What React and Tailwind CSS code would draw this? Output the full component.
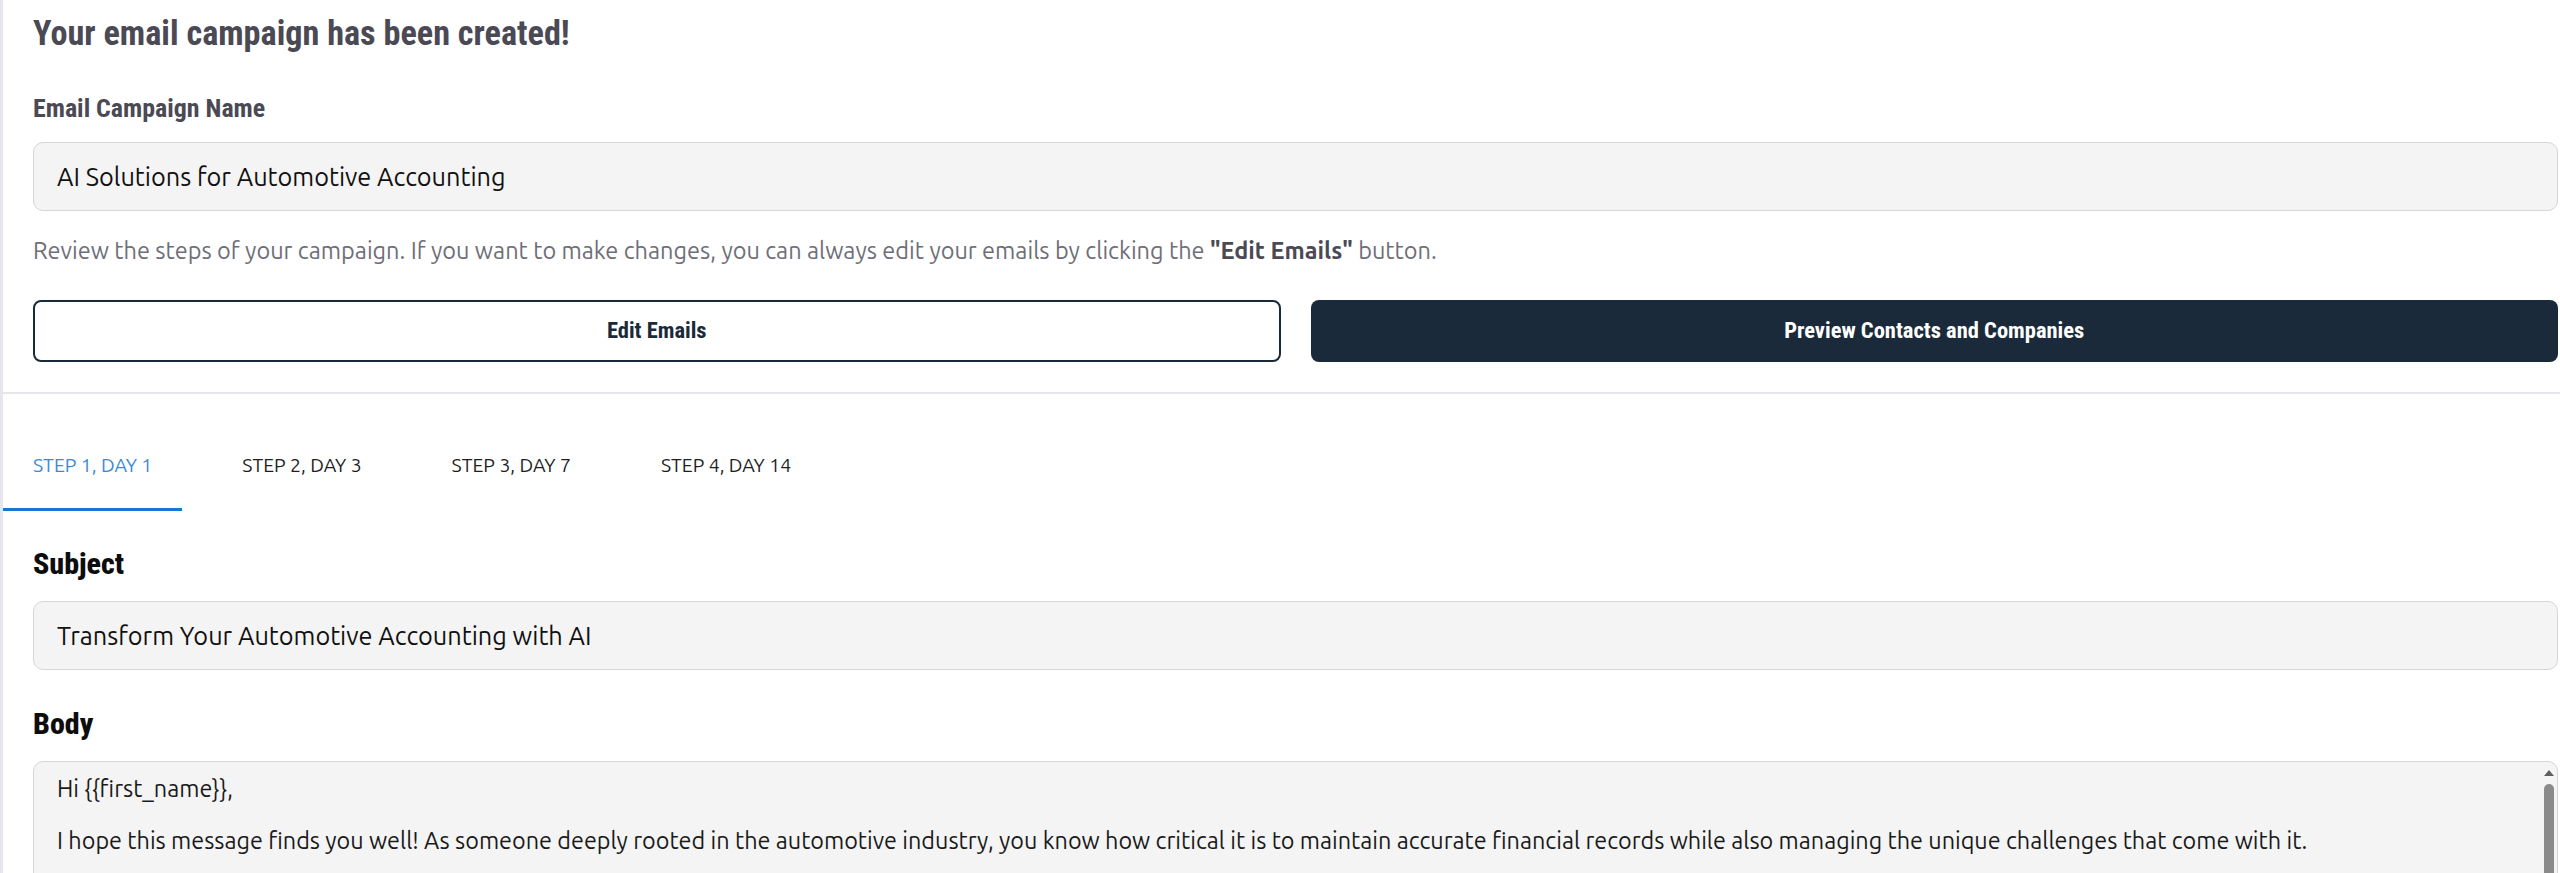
import React, { useState } from "react";

const steps = ["Step 1, Day 1", "Step 2, Day 3", "Step 3, Day 7", "Step 4, Day 14"];

const heading = "font-['Roboto_Condensed','Liberation_Sans',sans-serif]";
const body = "font-['Ubuntu','Open_Sans',sans-serif]";

const CampaignCreated = () => {
  const [active, setActive] = useState(0);

  return (
    <div className="min-h-screen border-l-[3px] border-[#e6e6ec] bg-white">
      {/* Summary */}
      <div className="pl-[30px] pr-[2px] pt-[13px] pb-[30px]">
        <h1 className={`${heading} text-[34.2px] font-bold leading-[40px] text-[#4a4954]`}>
          Your email campaign has been created!
        </h1>

        <h2 className={`${heading} mt-[39px] text-[25.9px] font-bold leading-[32px] text-[#4a4954]`}>
          Email Campaign Name
        </h2>
        <div
          className={`${body} mt-[18px] flex h-[69px] items-center rounded-[10px] border border-[#d4d6dc] bg-[#f4f4f4] pl-[23px] text-[25.3px] text-[#111]`}
        >
          AI Solutions for Automotive Accounting
        </div>

        <p className={`${body} mt-[23px] text-[23.5px] leading-[32px] text-[#6e6e78]`}>
          Review the steps of your campaign. If you want to make changes, you can always edit
          your emails by clicking the{" "}
          <span className="font-bold text-[#4a4954]">"Edit Emails"</span> button.
        </p>

        <div className="mt-[34px] grid grid-cols-2 gap-[30px]">
          <button
            className={`${heading} h-[62px] rounded-lg border-2 border-[#1b2a3a] bg-white text-[22.5px] font-bold text-[#1b2a3a]`}
          >
            Edit Emails
          </button>
          <button
            className={`${heading} h-[62px] rounded-lg bg-[#1b2a3a] text-[22.5px] font-bold text-white`}
          >
            Preview Contacts and Companies
          </button>
        </div>
      </div>

      <div className="h-[2px] bg-[#e6e6ec]" />

      {/* Step tabs */}
      <div className={`${body} flex gap-[30px]`}>
        {steps.map((s, i) => (
          <button
            key={s}
            onClick={() => setActive(i)}
            className={`border-b-[3px] px-[30px] pt-[59px] pb-[31px] text-[19.4px] leading-[24px] uppercase ${
              i === active
                ? "border-[#1976d2] text-[#3b8ad8]"
                : "border-transparent text-[#1f1f1f]"
            }`}
          >
            {s}
          </button>
        ))}
      </div>

      {/* Email content */}
      <div className="pl-[30px] pr-[2px]">
        <h3 className={`${heading} mt-[35px] text-[30px] font-extrabold leading-[36px] text-[#0d0d0d]`}>
          Subject
        </h3>
        <div
          className={`${body} mt-[19px] flex h-[69px] items-center rounded-[10px] border border-[#d4d6dc] bg-[#f4f4f4] pl-[23px] text-[25.3px] text-[#111]`}
        >
          Transform Your Automotive Accounting with AI
        </div>

        <h3 className={`${heading} mt-[36px] text-[30px] font-extrabold leading-[36px] text-[#0d0d0d]`}>
          Body
        </h3>
        <div className="relative mt-[19px] h-[300px] overflow-hidden rounded-[10px] border border-[#d4d6dc] bg-[#f4f4f4]">
          <div
            className={`${body} whitespace-pre-wrap pt-[13px] pl-[23px] pr-[40px] text-[23.4px] leading-[26px] text-[#1a1a1a]`}
          >
            {`Hi {{first_name}},

I hope this message finds you well! As someone deeply rooted in the automotive industry, you know how critical it is to maintain accurate financial records while also managing the unique challenges that come with it.`}
          </div>

          {/* scrollbar */}
          <div className="absolute right-[3px] top-[8px] flex w-[10px] flex-col items-center">
            <svg width="10" height="6" viewBox="0 0 10 6">
              <path d="M5 0 L10 6 L0 6 Z" fill="#5f5f5f" />
            </svg>
            <div className="mt-[8px] h-[400px] w-[10px] rounded-t-full bg-[#8a8a8a]" />
          </div>
        </div>
      </div>
    </div>
  );
};

export default function App() {
  return <CampaignCreated />;
}
